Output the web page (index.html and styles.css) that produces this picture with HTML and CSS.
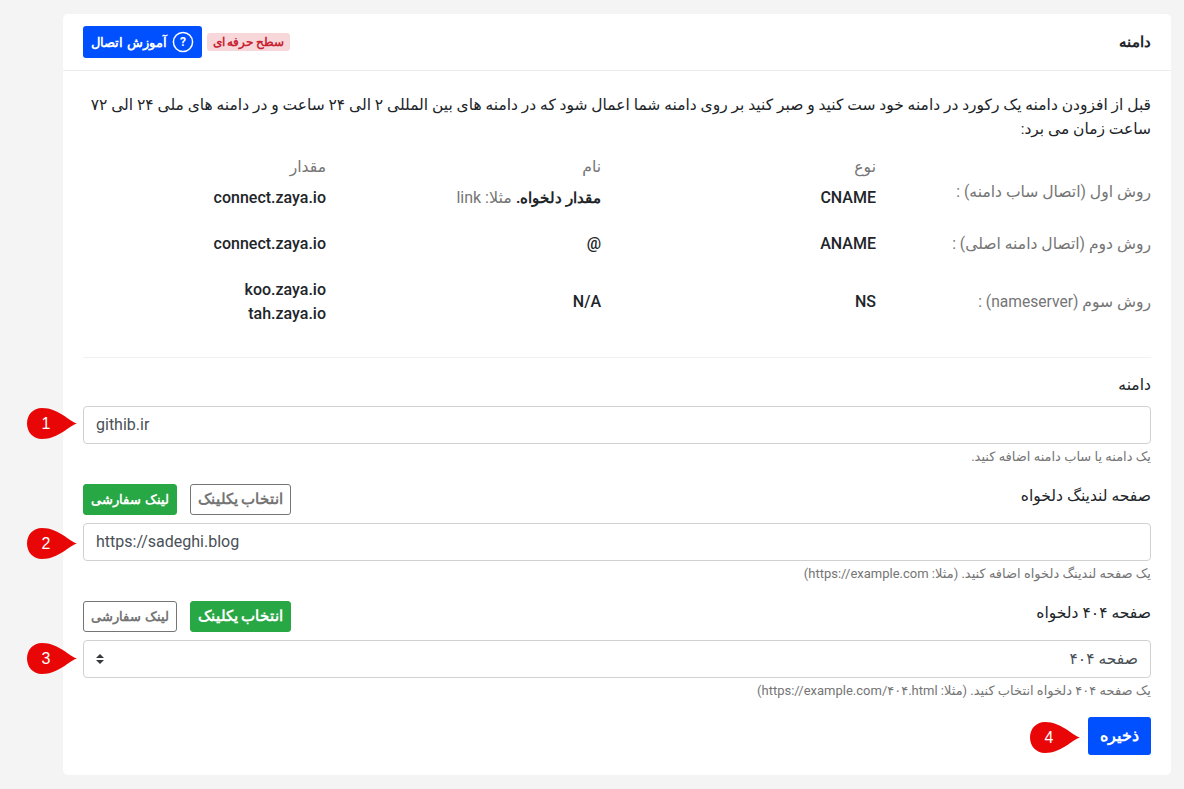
FILE: index.html
```html
<!DOCTYPE html>
<html lang="fa" dir="rtl">
<head>
<meta charset="utf-8">
<title>دامنه</title>
<link rel="stylesheet" href="styles.css">
</head>
<body>
<main class="card">
  <header class="card-head">
    <h1 class="card-title">دامنه</h1>
    <div class="head-actions">
      <span class="badge">سطح حرفه ای</span>
      <a class="btn-help">
        <svg class="help-icon" viewBox="0 0 22 22" width="22" height="22" aria-hidden="true"><circle cx="11" cy="11" r="9.6" fill="none" stroke="#fff" stroke-width="1.5"/><text x="11" y="15.2" text-anchor="middle" class="help-q">?</text></svg>
        <span>آموزش اتصال</span>
      </a>
    </div>
  </header>
  <div class="card-body">
    <p class="intro">قبل از افزودن دامنه یک رکورد در دامنه خود ست کنید و صبر کنید بر روی دامنه شما اعمال شود که در دامنه های بین المللی ۲ الی ۲۴ ساعت و در دامنه های ملی ۲۴ الی ۷۲ ساعت زمان می برد:</p>
    <div class="records">
      <div class="rec-head"></div>
      <div class="rec-head">نوع</div>
      <div class="rec-head">نام</div>
      <div class="rec-head">مقدار</div>

      <div class="rec-label rec-label-first">روش اول (اتصال ساب دامنه) :</div>
      <div class="rec-val">CNAME</div>
      <div class="rec-val"><b>مقدار دلخواه.</b> <span class="muted">مثلا: link</span></div>
      <div class="rec-val">connect.zaya.io</div>

      <div class="rec-label">روش دوم (اتصال دامنه اصلی) :</div>
      <div class="rec-val">ANAME</div>
      <div class="rec-val">@</div>
      <div class="rec-val">connect.zaya.io</div>

      <div class="rec-label">روش سوم (nameserver) :</div>
      <div class="rec-val">NS</div>
      <div class="rec-val">N/A</div>
      <div class="rec-val">koo.zaya.io<br>tah.zaya.io</div>
    </div>
    <hr class="divider">

    <section class="field">
      <div class="field-head field-head-plain"><label class="field-label">دامنه</label></div>
      <div class="control-wrap">
        <svg class="pin pin-1" viewBox="0 0 50 31" width="50" height="31" aria-hidden="true"><path d="M50 15.5C42 13.5 32 0 15 0C6 0 0 7 0 15.5C0 24 6 31 15 31C32 31 42 17.5 50 15.5Z"/></svg>
        <span class="pin-num pin-1">1</span>
        <input class="control ltr" type="text" value="githib.ir">
      </div>
      <p class="help">یک دامنه یا ساب دامنه اضافه کنید.</p>
    </section>

    <section class="field">
      <div class="field-head">
        <label class="field-label">صفحه لندینگ دلخواه</label>
        <div class="toggle">
          <span class="tbtn tbtn-off tbtn-wide">انتخاب یکلینک</span>
          <span class="tbtn tbtn-on tbtn-narrow">لینک سفارشی</span>
        </div>
      </div>
      <div class="control-wrap">
        <svg class="pin pin-2" viewBox="0 0 50 31" width="50" height="31" aria-hidden="true"><path d="M50 15.5C42 13.5 32 0 15 0C6 0 0 7 0 15.5C0 24 6 31 15 31C32 31 42 17.5 50 15.5Z"/></svg>
        <span class="pin-num pin-2">2</span>
        <input class="control ltr" type="text" value="https://sadeghi.blog">
      </div>
      <p class="help">یک صفحه لندینگ دلخواه اضافه کنید. (مثلا: https://example.com)</p>
    </section>

    <section class="field">
      <div class="field-head">
        <label class="field-label">صفحه ۴۰۴ دلخواه</label>
        <div class="toggle">
          <span class="tbtn tbtn-on tbtn-wide">انتخاب یکلینک</span>
          <span class="tbtn tbtn-off tbtn-narrow">لینک سفارشی</span>
        </div>
      </div>
      <div class="control-wrap">
        <svg class="pin pin-3" viewBox="0 0 50 31" width="50" height="31" aria-hidden="true"><path d="M50 15.5C42 13.5 32 0 15 0C6 0 0 7 0 15.5C0 24 6 31 15 31C32 31 42 17.5 50 15.5Z"/></svg>
        <span class="pin-num pin-3">3</span>
        <div class="control select">
          <span>صفحه ۴۰۴</span>
          <svg viewBox="0 0 8 10" width="8" height="10" aria-hidden="true"><path d="M4 0L8 4H0ZM4 10L0 6H8Z" fill="#343a40"/></svg>
        </div>
      </div>
      <p class="help">یک صفحه ۴۰۴ دلخواه انتخاب کنید. (مثلا: https://example.com/۴۰۴.html)</p>
    </section>

    <div class="actions">
      <div class="save-wrap">
        <button class="btn-save" type="button">ذخیره</button>
        <svg class="pin pin-save" viewBox="0 0 50 31" width="50" height="31" aria-hidden="true"><path d="M50 15.5C42 13.5 32 0 15 0C6 0 0 7 0 15.5C0 24 6 31 15 31C32 31 42 17.5 50 15.5Z"/></svg>
        <span class="pin-num pin-save">4</span>
      </div>
    </div>
  </div>
</main>
</body>
</html>
```
FILE: styles.css
```css
* { box-sizing: border-box; }
html, body { margin: 0; padding: 0; }
body {
  background: #f4f4f4;
  color: #212529;
  font-family: Roboto, "DejaVu Sans", sans-serif;
  font-size: 16px;
  height: 789px;
  overflow: hidden;
  padding: 14px 13px 0 63px;
}
.card {
  background: #fff;
  border-radius: 5px;
  height: 761px;
}
.card-head {
  height: 57px;
  padding: 12px 20px 0;
  border-bottom: 1px solid #ececec;
  display: flex;
  justify-content: space-between;
}
.card-title,
.badge,
.btn-help,
.tbtn,
.btn-save,
.rec-val b { font-family: Roboto, sans-serif; font-weight: 700; }
.card-title { margin: 0; font-size: 15px; line-height: 32px; }
.head-actions { display: flex; align-items: center; gap: 5px; height: 32px; }
.badge {
  background: #f8d7da;
  color: #c82333;
  font-size: 12px;
  border-radius: 3px;
  height: 18px;
  line-height: 18px;
  width: 83px;
  text-align: center;
  white-space: nowrap;
}
.btn-help {
  background: #0050ff;
  color: #fff;
  width: 119px;
  height: 32px;
  border-radius: 3px;
  font-size: 13.3px;
  display: flex;
  align-items: center;
  justify-content: center;
  gap: 5px;
  white-space: nowrap;
}
.help-q { font: 700 12px Roboto, sans-serif; fill: #fff; }
.card-body { padding: 22px 20px 0; }
.intro { margin: 0; line-height: 24px; font-size: 15.5px; }
.records {
  display: grid;
  grid-template-columns: 275px 275px 275px 243px;
  align-items: center;
  row-gap: 22px;
  margin-top: 14px;
}
.rec-head { color: #757575; height: 24px; line-height: 24px; margin-bottom: -15px; font-size: 15.6px; }
.rec-val { font-weight: 500; line-height: 24px; }
.rec-val b { font-size: 15px; }
.rec-val .muted { color: #757575; font-weight: 400; }
.rec-label { color: #757575; line-height: 24px; font-size: 15.6px; }
.rec-label-first { margin-top: -12px; }
.divider { border: 0; border-top: 1px solid #f1f1f1; margin: 31px 0 0; }
.field-head { display: flex; justify-content: space-between; align-items: flex-start; height: 31px; margin-bottom: 8px; }
.field-head-plain { height: 24px; margin-top: 15px; margin-bottom: 9px; }
.field-label { line-height: 24px; font-size: 15.6px; }
.toggle { display: flex; gap: 13px; }
.tbtn {
  height: 31px;
  line-height: 29px;
  border-radius: 3px;
  border: 1px solid #757575;
  text-align: center;
  white-space: nowrap;
}
.tbtn-wide { width: 101px; font-size: 14.6px; }
.tbtn-narrow { width: 94px; font-size: 13px; }
.tbtn-on { background: #28a745; border-color: #28a745; color: #fff; }
.tbtn-off { background: #fff; color: #757575; }
.control-wrap { position: relative; }
.control {
  width: 100%;
  height: 38px;
  border: 1px solid #d1d1d1;
  border-radius: 4px;
  padding: 0 12px 2px;
  font-family: inherit;
  font-size: 16px;
  color: #495057;
  background: #fff;
  outline: 0;
  display: block;
}
.ltr { direction: ltr; text-align: left; }
.select { display: flex; align-items: center; justify-content: space-between; font-size: 15.6px; padding-bottom: 0; }
.pin { position: absolute; left: -56px; fill: #e90606; }
.pin-num {
  position: absolute;
  left: -56px;
  width: 38px;
  height: 31px;
  text-align: center;
  color: #fff;
  font: 16px/31px "Liberation Sans", sans-serif;
}
.pin-1 { top: 2px; }
.pin-2 { top: 5px; }
.pin-3 { top: 3px; }
.pin-save { top: 5px; left: -58px; }
.help { margin: 5px 0 19px; font-size: 13px; line-height: 16px; color: #757575; height: 16px; }
.actions { margin-top: -1px; }
.save-wrap { position: relative; width: 63px; }
.btn-save {
  display: block;
  width: 63px;
  height: 38px;
  border: 0;
  border-radius: 3px;
  background: #0050ff;
  color: #fff;
  font-size: 15.5px;
}
```
